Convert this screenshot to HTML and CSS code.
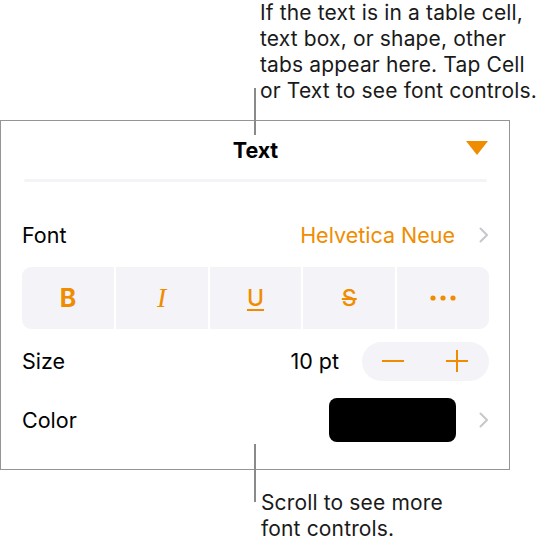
FILE: index.html
```html
<!DOCTYPE html>
<html>
<head>
<meta charset="utf-8">
<link rel="stylesheet" href="styles.css">
</head>
<body>
<div class="page">
  <p class="callout callout-top">If the text is in a table cell,<br>text box, or shape, other<br>tabs appear here. Tap Cell<br>or Text to see font controls.</p>
  <span class="leader leader-top"></span>

  <div class="panel">
    <div class="header">
      <span></span>
      <span class="title">Text</span>
      <svg class="tri" width="22" height="14" viewBox="0 0 22 14"><polygon points="0,0 22,0 11,14" fill="#f08c00"/></svg>
    </div>
    <div class="sep"></div>

    <div class="row row-font">
      <span class="label">Font</span>
      <span class="right">
        <span class="value">Helvetica Neue</span>
        <svg class="chev" width="10" height="16" viewBox="0 0 10 16"><polyline points="1.5,1.5 8,8 1.5,14.5" fill="none" stroke="#c7c7cc" stroke-width="2" stroke-linecap="round" stroke-linejoin="round"/></svg>
      </span>
    </div>

    <div class="styles">
      <span class="seg seg-b">B</span>
      <span class="seg seg-i">I</span>
      <span class="seg seg-u">U</span>
      <span class="seg seg-s">S</span>
      <span class="seg seg-more">
        <svg width="26" height="6" viewBox="0 0 26 6"><circle cx="3" cy="3" r="2.6" fill="#f08c00"/><circle cx="13" cy="3" r="2.6" fill="#f08c00"/><circle cx="23" cy="3" r="2.6" fill="#f08c00"/></svg>
      </span>
    </div>

    <div class="row row-size">
      <span class="label">Size</span>
      <span class="right">
        <span class="num">10 pt</span>
        <span class="stepper">
          <svg width="22" height="22" viewBox="0 0 22 22"><line x1="0" y1="11" x2="22" y2="11" stroke="#f08c00" stroke-width="2"/></svg>
          <svg width="22" height="22" viewBox="0 0 22 22"><line x1="0" y1="11" x2="22" y2="11" stroke="#f08c00" stroke-width="2"/><line x1="11" y1="0" x2="11" y2="22" stroke="#f08c00" stroke-width="2"/></svg>
        </span>
      </span>
    </div>

    <div class="row row-color">
      <span class="label">Color</span>
      <span class="right">
        <span class="swatch"></span>
        <svg class="chev" width="10" height="16" viewBox="0 0 10 16"><polyline points="1.5,1.5 8,8 1.5,14.5" fill="none" stroke="#c7c7cc" stroke-width="2" stroke-linecap="round" stroke-linejoin="round"/></svg>
      </span>
    </div>
  </div>

  <span class="leader leader-bottom"></span>
  <p class="callout callout-bottom">Scroll to see more<br>font controls.</p>
</div>
</body>
</html>
```

FILE: styles.css
```css
* { box-sizing: border-box; }
html, body { margin: 0; padding: 0; background: #fff; }
body {
  font-family: Inter, "Liberation Sans", sans-serif;
  color: #000;
}
.page {
  position: relative;
  width: 538px;
  height: 546px;
  overflow: hidden;
}
.callout {
  margin: 0;
  font-size: 21px;
  line-height: 26px;
  color: #1a1a1a;
  letter-spacing: 0.15px;
}
.callout-top {
  padding-left: 260px;
  height: 120px;
}
.leader {
  position: absolute;
  left: 254px;
  width: 2px;
  background: #8a8a8a;
}
.leader-top { top: 88px; height: 47px; }
.leader-bottom { top: 444px; height: 58px; }

.panel {
  width: 510px;
  height: 350px;
  border: 1px solid #959595;
  padding: 0 20px 0 21px;
  background: #fff;
}
.header {
  height: 58px;
  display: grid;
  grid-template-columns: 1fr auto 1fr;
  align-items: center;
}
.title {
  font-size: 21.5px;
  font-weight: 700;
  letter-spacing: -0.1px;
}
.tri { justify-self: end; margin-right: 1px; margin-top: -4px; }
.sep {
  height: 3px;
  margin: 0 2px 0 2px;
  background: #f3f3f8;
  border-radius: 2px;
}
.row {
  height: 44px;
  display: flex;
  align-items: center;
  justify-content: space-between;
}
.label { font-size: 21.5px; }
.right { display: flex; align-items: center; }
.row-font { margin-top: 31px; }
.value { color: #f08c00; font-size: 21.5px; }
.chev { margin-left: 24px; }
.styles {
  margin-top: 10px;
  height: 62px;
  display: grid;
  grid-template-columns: repeat(5, 1fr);
  gap: 2px;
  border-radius: 9px;
  overflow: hidden;
}
.seg {
  background: #f4f4f8;
  display: flex;
  align-items: center;
  justify-content: center;
  color: #f08c00;
  font-size: 23px;
}
.seg-b { font-weight: 700; font-size: 25px; }
.seg-i { font-family: "Liberation Serif", serif; font-style: italic; font-size: 28px; }
.seg-u { text-decoration: underline; text-decoration-thickness: 2px; text-underline-offset: 3px; font-weight: 500; }
.seg-s { text-decoration: line-through; text-decoration-thickness: 2px; font-weight: 500; }
.row-size { margin-top: 10px; }
.num { font-size: 21.5px; margin-right: 23px; }
.stepper {
  width: 127px;
  height: 39px;
  border-radius: 20px;
  background: #f4f4f8;
  display: flex;
  align-items: center;
  justify-content: space-between;
  padding: 0 21px 0 20px;
}
.row-color { margin-top: 15px; }
.swatch {
  width: 127px;
  height: 44px;
  background: #000;
  border-radius: 8px;
}
.row-color .chev { margin-left: 23px; }
.callout-bottom {
  padding-left: 261px;
  margin-top: 20px;
}
```
